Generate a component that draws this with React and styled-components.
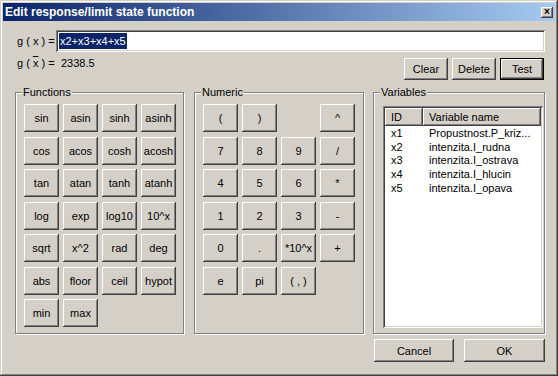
import React from "react";
import styled, { createGlobalStyle } from "styled-components";

const GlobalStyle = createGlobalStyle`
  body {
    margin: 0;
    background: #d4d0c8;
    font-family: "Liberation Sans", Arial, sans-serif;
    font-size: 11px;
    color: #000;
  }
`;

const raised = `
  box-shadow: inset -1px -1px #404040, inset 1px 1px #fff,
    inset -2px -2px #808080, inset 2px 2px #d4d0c8;
`;

const sunken = `
  box-shadow: inset 1px 1px #808080, inset -1px -1px #fff,
    inset 2px 2px #404040, inset -2px -2px #d4d0c8;
`;

const Window = styled.div`
  width: 558px;
  height: 376px;
  box-sizing: border-box;
  padding: 3px;
  background: #d4d0c8;
  box-shadow: inset -1px -1px #404040, inset 1px 1px #d4d0c8,
    inset -2px -2px #808080, inset 2px 2px #fff;
  display: flex;
  flex-direction: column;
`;

const TitleBar = styled.div`
  height: 18px;
  padding: 0 2px;
  display: flex;
  align-items: center;
  justify-content: space-between;
  background: linear-gradient(to right, #0a246a, #a6caf0);
  color: #fff;
  font-weight: bold;
  font-size: 12px;
`;

const CloseBtn = styled.div`
  width: 12px;
  height: 11px;
  background: #d4d0c8;
  ${raised}
  color: #000;
  font-size: 10px;
  font-weight: bold;
  line-height: 10px;
  text-align: center;
`;

const Content = styled.div`
  padding: 9px 10px 0 12px;
  display: flex;
  flex-direction: column;
`;

const Row = styled.div`
  display: flex;
  align-items: ${p => p.$align || "center"};
  margin-top: ${p => p.$mt || 0}px;
  gap: ${p => p.$gap || 0}px;
  justify-content: ${p => p.$justify || "flex-start"};
`;

const Label = styled.div`
  width: ${p => p.$w}px;
  padding-left: 2px;
  box-sizing: border-box;
  line-height: ${p => p.$lh || 13}px;
  white-space: pre;
`;

const Bar = styled.span`
  text-decoration: overline;
`;

const TextBox = styled.div`
  flex: 1;
  height: 22px;
  box-sizing: border-box;
  padding: 3px 3px;
  background: #fff;
  ${sunken}
`;

const Selected = styled.span`
  display: inline-block;
  background: #0a246a;
  color: #fff;
  line-height: 16px;
  padding: 0 1px;
`;

const Value = styled.div`
  line-height: 11px;
`;

const ButtonGroup = styled.div`
  margin-left: auto;
  margin-right: 1px;
  display: flex;
  gap: 4px;
`;

const Btn = styled.div`
  width: ${p => p.$w || 35}px;
  height: ${p => p.$h || 28}px;
  box-sizing: border-box;
  display: flex;
  align-items: center;
  justify-content: center;
  background: #d4d0c8;
  white-space: pre;
  ${p =>
    p.$default
      ? `box-shadow: inset 0 0 0 1px #000, inset -2px -2px #404040, inset 2px 2px #fff,
    inset -3px -3px #808080;`
      : raised}
`;

const Groups = styled.div`
  display: flex;
  margin-top: 12px;
  height: 242px;
`;

const GroupBox = styled.div`
  position: relative;
  box-sizing: border-box;
  width: ${p => (p.$w ? `${p.$w}px` : "auto")};
  flex: ${p => (p.$w ? "none" : 1)};
  margin-left: ${p => p.$ml || 0}px;
  border: 1px solid #808080;
  box-shadow: 1px 1px 0 #fff, inset 1px 1px 0 #fff;
  padding: 11px 0 0 8px;
  display: flex;
  flex-direction: column;
`;

const Legend = styled.span`
  position: absolute;
  top: -7px;
  left: 6px;
  padding: 0 1px;
  background: #d4d0c8;
  line-height: 13px;
`;

const KeyGrid = styled.div`
  display: grid;
  grid-template-columns: repeat(4, 35px);
  grid-auto-rows: 28px;
  column-gap: 4px;
  row-gap: 4.5px;
`;

const ListBox = styled.div`
  flex: 1;
  margin: 2px 1px 5px 1px;
  padding: 2px;
  background: #fff;
  ${sunken}
  display: flex;
  flex-direction: column;
`;

const ListRow = styled.div`
  display: flex;
  height: ${p => (p.$header ? 18 : 13.75)}px;
  align-items: center;
`;

const Cell = styled.div`
  box-sizing: border-box;
  height: 100%;
  display: flex;
  align-items: center;
  padding-left: 6px;
  white-space: nowrap;
  overflow: hidden;
  width: ${p => (p.$w ? `${p.$w}px` : "auto")};
  flex: ${p => (p.$w ? "none" : 1)};
  ${p => (p.$header ? raised : "")}
  ${p => (p.$header ? "background: #d4d0c8;" : "")}
`;

const functions = [
  "sin", "asin", "sinh", "asinh",
  "cos", "acos", "cosh", "acosh",
  "tan", "atan", "tanh", "atanh",
  "log", "exp", "log10", "10^x",
  "sqrt", "x^2", "rad", "deg",
  "abs", "floor", "ceil", "hypot",
  "min", "max",
];

const numeric = [
  "(", ")", null, "^",
  "7", "8", "9", "/",
  "4", "5", "6", "*",
  "1", "2", "3", "-",
  "0", ".", "*10^x", "+",
  "e", "pi", "( , )",
];

const variables = [
  ["x1", "Propustnost.P_kriz..."],
  ["x2", "intenzita.I_rudna"],
  ["x3", "intenzita.I_ostrava"],
  ["x4", "intenzita.I_hlucin"],
  ["x5", "intenzita.I_opava"],
];

export default function App() {
  return (
    <>
      <GlobalStyle />
      <Window>
        <TitleBar>
          <span style={{ paddingLeft: 0 }}>Edit response/limit state function</span>
          <CloseBtn>×</CloseBtn>
        </TitleBar>
        <Content>
          <Row>
            <Label $w={41}>g ( x ) =</Label>
            <TextBox>
              <Selected>x2+x3+x4+x5</Selected>
            </TextBox>
          </Row>
          <Row $align="flex-start" $mt={6}>
            <Label $w={46} $lh={11}>
              g ( <Bar>x</Bar> ) =
            </Label>
            <Value>2338.5</Value>
            <ButtonGroup>
              <Btn $w={44} $h={22}>Clear</Btn>
              <Btn $w={44} $h={22}>Delete</Btn>
              <Btn $w={44} $h={22} $default>Test</Btn>
            </ButtonGroup>
          </Row>
          <Groups>
            <GroupBox $w={169}>
              <Legend>Functions</Legend>
              <KeyGrid>
                {functions.map(f => (
                  <Btn key={f}>{f}</Btn>
                ))}
              </KeyGrid>
            </GroupBox>
            <GroupBox $w={170} $ml={10}>
              <Legend>Numeric</Legend>
              <KeyGrid>
                {numeric.map((n, i) =>
                  n ? <Btn key={i}>{n}</Btn> : <div key={i} />
                )}
              </KeyGrid>
            </GroupBox>
            <GroupBox $ml={9}>
              <Legend>Variables</Legend>
              <ListBox>
                <ListRow $header>
                  <Cell $header $w={38}>ID</Cell>
                  <Cell $header>Variable name</Cell>
                </ListRow>
                {variables.map(([id, name]) => (
                  <ListRow key={id}>
                    <Cell $w={38}>{id}</Cell>
                    <Cell>{name}</Cell>
                  </ListRow>
                ))}
              </ListBox>
            </GroupBox>
          </Groups>
          <Row $mt={5} $gap={10} $justify="flex-end">
            <Btn $w={80} $h={23}>Cancel</Btn>
            <Btn $w={81} $h={23}>OK</Btn>
          </Row>
        </Content>
      </Window>
    </>
  );
}
